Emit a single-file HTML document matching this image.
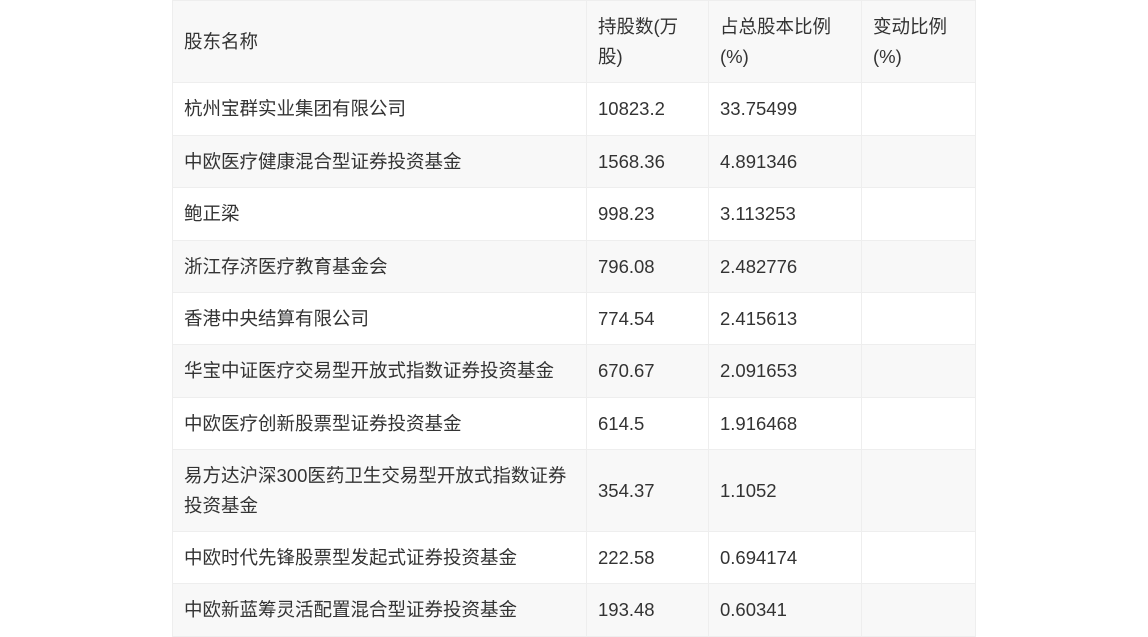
<!DOCTYPE html>
<html><head><meta charset="utf-8"><style>
html,body{margin:0;padding:0;background:#fff;width:1148px;height:635px;overflow:hidden}
table{position:absolute;left:172px;top:0;border-collapse:collapse;width:803px;table-layout:fixed;font-family:"Liberation Sans","Noto Sans CJK SC",sans-serif;font-size:18.5px;color:#333;line-height:30px}
td{border:1px solid #eee;padding:0 11px;vertical-align:middle;white-space:nowrap}
tr:nth-child(odd){background:#f8f8f8}
tr:nth-child(even){background:#fff}
</style></head><body>
<table>
<colgroup><col style="width:414px"><col style="width:122px"><col style="width:153px"><col style="width:114px"></colgroup>
<tr style="height:82px"><td>股东名称</td><td>持股数(万<br>股)</td><td>占总股本比例<br>(%)</td><td>变动比例<br>(%)</td></tr>
<tr style="height:53px"><td>杭州宝群实业集团有限公司</td><td>10823.2</td><td>33.75499</td><td></td></tr>
<tr style="height:52px"><td>中欧医疗健康混合型证券投资基金</td><td>1568.36</td><td>4.891346</td><td></td></tr>
<tr style="height:53px"><td>鲍正梁</td><td>998.23</td><td>3.113253</td><td></td></tr>
<tr style="height:52px"><td>浙江存济医疗教育基金会</td><td>796.08</td><td>2.482776</td><td></td></tr>
<tr style="height:52px"><td>香港中央结算有限公司</td><td>774.54</td><td>2.415613</td><td></td></tr>
<tr style="height:53px"><td>华宝中证医疗交易型开放式指数证券投资基金</td><td>670.67</td><td>2.091653</td><td></td></tr>
<tr style="height:52px"><td>中欧医疗创新股票型证券投资基金</td><td>614.5</td><td>1.916468</td><td></td></tr>
<tr style="height:82px"><td>易方达沪深300医药卫生交易型开放式指数证券<br>投资基金</td><td>354.37</td><td>1.1052</td><td></td></tr>
<tr style="height:52px"><td>中欧时代先锋股票型发起式证券投资基金</td><td>222.58</td><td>0.694174</td><td></td></tr>
<tr style="height:53px"><td>中欧新蓝筹灵活配置混合型证券投资基金</td><td>193.48</td><td>0.60341</td><td></td></tr>
</table>
</body></html>
